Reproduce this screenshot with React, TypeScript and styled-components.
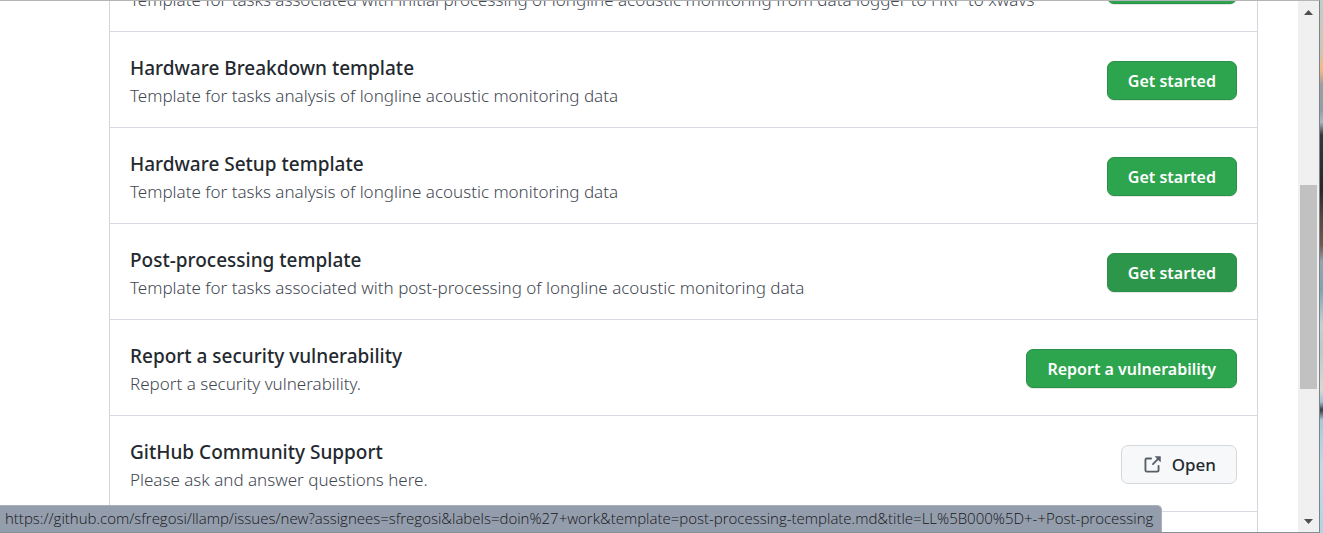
import React from 'react';
import styled, { createGlobalStyle, css } from 'styled-components';

const GlobalStyle = createGlobalStyle`
  * { box-sizing: border-box; }
  body {
    margin: 0;
    background: #ffffff;
    font-family: "Noto Sans", "Open Sans", sans-serif;
    color: #24292f;
  }
`;

const Desktop = styled.div`
  display: flex;
  height: 100vh;
  overflow: hidden;
  padding-right: 3px;
  background: linear-gradient(
    180deg,
    #bdcfca 0, #c9c9b4 50px, #efb987 70px, #97a0a2 85px, #8f9fa5 110px,
    #a9b9c0 122px, #30383c 135px, #24282b 190px, #51453f 215px, #6b5a50 245px,
    #93a5ad 262px, #7fa3b4 290px, #c3d3d5 325px, #b8cacb 350px, #d5dcd6 390px,
    #9cc0d6 402px, #333d44 410px, #a8c8dc 420px, #c0dcec 470px, #b2d2e6 533px
  );
`;

const Window = styled.div`
  position: relative;
  display: flex;
  flex: 1;
  min-width: 0;
  overflow: hidden;
  border-top: 1px solid #b5b5b5;
  border-right: 1px solid #7d8388;
  border-bottom: 1px solid #878f96;
`;

const Page = styled.main`
  flex: 1;
  min-width: 0;
  overflow: hidden;
  padding: 0 40px 0 109px;
  background: #ffffff;
`;

const TemplateList = styled.ul`
  list-style: none;
  margin: -65px 0 0;
  padding: 0;
  border: 1px solid #d0d7de;
  border-top: 0;
`;

const Row = styled.li`
  display: flex;
  align-items: center;
  justify-content: space-between;
  height: 96px;
  padding: 2px 20px 0;
  border-bottom: 1px solid #d8dce2;
`;

const Summary = styled.div`
  min-width: 0;
  padding-top: 2px;
  white-space: nowrap;
`;

const Title = styled.h3`
  margin: 0;
  font-size: 19px;
  line-height: 28px;
  font-weight: 500;
`;

const Description = styled.p`
  margin: 0;
  font-size: 17px;
  line-height: 28px;
  font-weight: 300;
  color: #3f4852;
`;

const buttonBase = css`
  display: inline-flex;
  align-items: center;
  justify-content: center;
  flex-shrink: 0;
  height: 39px;
  padding: 1px 20px 0;
  border-radius: 7px;
  font-family: inherit;
  font-size: 16px;
  line-height: 24px;
  font-weight: 600;
  white-space: nowrap;
  cursor: pointer;
`;

const PrimaryButton = styled.button<{ $hovered?: boolean }>`
  ${buttonBase}
  border: 1px solid #2a9147;
  background: ${({ $hovered }) => ($hovered ? '#2c974b' : '#2da44e')};
  color: #ffffff;
  box-shadow: 0 1px 0 rgba(27, 31, 36, 0.1);
`;

const OpenLink = styled.a`
  ${buttonBase}
  gap: 10px;
  border: 1px solid #d5d8da;
  background: #f6f8fa;
  color: #24292f;
  font-size: 17px;
  font-weight: 500;
  text-decoration: none;
`;

const ScrollBar = styled.div`
  display: flex;
  flex-direction: column;
  align-items: center;
  width: 21px;
  padding: 9px 2px 8px;
  background: #f0f0f0;
`;

const Thumb = styled.div`
  width: 17px;
  height: 204px;
  margin: 170px 0 auto;
  background: #c1c1c1;
`;

const StatusBar = styled.div`
  position: absolute;
  left: 0;
  bottom: 0;
  height: 27px;
  padding: 0 8px 0 5px;
  border-top: 1px solid #a9b0ba;
  border-right: 1px solid #a9b0ba;
  border-top-right-radius: 5px;
  background: #949dac;
  color: #14171b;
  font-family: "Open Sans", sans-serif;
  font-size: 15px;
  line-height: 25px;
  font-weight: 300;
  white-space: nowrap;
`;

const ExternalIcon = () => (
  <svg width="20" height="20" viewBox="0 0 16 16" fill="#57606a" aria-hidden="true">
    <path d="M10.604 1h4.146a.25.25 0 01.25.25v4.146a.25.25 0 01-.427.177L13.03 4.03 9.28 7.78a.75.75 0 01-1.06-1.06l3.75-3.75-1.543-1.543A.25.25 0 0110.604 1zM3.75 2A1.75 1.75 0 002 3.75v8.5c0 .966.784 1.75 1.75 1.75h8.5A1.75 1.75 0 0014 12.25v-3.5a.75.75 0 00-1.5 0v3.5a.25.25 0 01-.25.25h-8.5a.25.25 0 01-.25-.25v-8.5a.25.25 0 01.25-.25h3.5a.75.75 0 000-1.5h-3.5z" />
  </svg>
);

const Arrow = ({ down = false }: { down?: boolean }) => (
  <svg width="9" height="5" viewBox="0 0 9 5" fill="#505050" aria-hidden="true">
    <path d={down ? 'M0 0h9L4.5 5z' : 'M0 5h9L4.5 0z'} />
  </svg>
);

interface Template {
  title: string;
  description: string;
  action: string;
  hovered?: boolean;
  external?: boolean;
}

const templates: Template[] = [
  {
    title: 'Data Processing template',
    description:
      'Template for tasks associated with initial processing of longline acoustic monitoring from data logger to HRP to xwavs',
    action: 'Get started',
  },
  {
    title: 'Hardware Breakdown template',
    description: 'Template for tasks analysis of longline acoustic monitoring data',
    action: 'Get started',
  },
  {
    title: 'Hardware Setup template',
    description: 'Template for tasks analysis of longline acoustic monitoring data',
    action: 'Get started',
  },
  {
    title: 'Post-processing template',
    description: 'Template for tasks associated with post-processing of longline acoustic monitoring data',
    action: 'Get started',
    hovered: true,
  },
  {
    title: 'Report a security vulnerability',
    description: 'Report a security vulnerability.',
    action: 'Report a vulnerability',
  },
  {
    title: 'GitHub Community Support',
    description: 'Please ask and answer questions here.',
    action: 'Open',
    external: true,
  },
];

const Spacer = styled.li`
  height: 96px;
`;

export default function App() {
  return (
    <Desktop>
      <GlobalStyle />
      <Window>
        <Page>
          <TemplateList>
            {templates.map((t) => (
              <Row key={t.title}>
                <Summary>
                  <Title>{t.title}</Title>
                  <Description>{t.description}</Description>
                </Summary>
                {t.external ? (
                  <OpenLink href="#open">
                    <ExternalIcon />
                    {t.action}
                  </OpenLink>
                ) : (
                  <PrimaryButton type="button" $hovered={t.hovered}>
                    {t.action}
                  </PrimaryButton>
                )}
              </Row>
            ))}
            <Spacer />
          </TemplateList>
        </Page>
        <ScrollBar>
          <Arrow />
          <Thumb />
          <Arrow down />
        </ScrollBar>
        <StatusBar>
          https://github.com/sfregosi/llamp/issues/new?assignees=sfregosi&amp;labels=doin%27+work&amp;template=post-processing-template.md&amp;title=LL%5B000%5D+-+Post-processing
        </StatusBar>
      </Window>
    </Desktop>
  );
}
